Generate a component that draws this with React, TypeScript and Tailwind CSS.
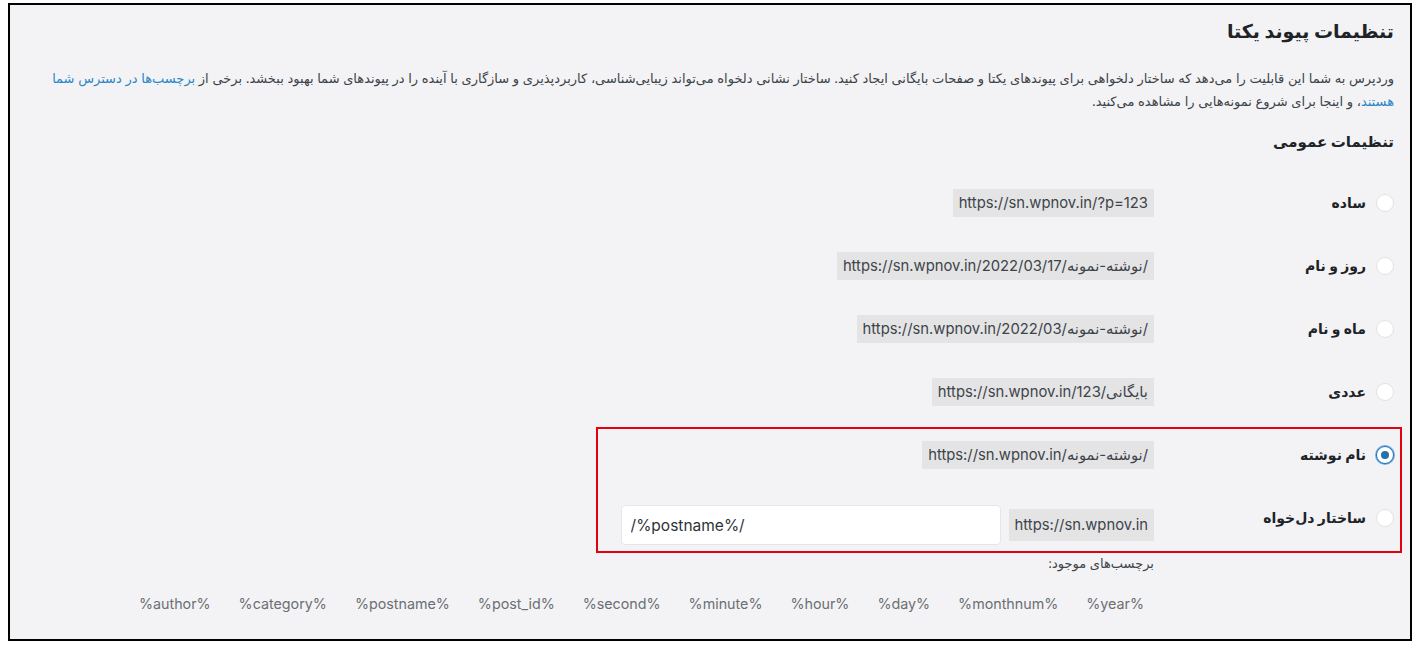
import React from "react";

const rows = [
  { label: "ساده", url: "https://sn.wpnov.in/?p=123" },
  { label: "روز و نام", url: "https://sn.wpnov.in/2022/03/17/نوشته-نمونه/" },
  { label: "ماه و نام", url: "https://sn.wpnov.in/2022/03/نوشته-نمونه/" },
  { label: "عددی", url: "https://sn.wpnov.in/بایگانی/123" },
];

const tags = ["%year%", "%monthnum%", "%day%", "%hour%", "%minute%", "%second%", "%post_id%", "%postname%", "%category%", "%author%"];

function Radio({ checked }: { checked?: boolean }) {
  if (checked)
    return (
      <span className="flex h-[18px] w-[18px] shrink-0 items-center justify-center rounded-full border border-[#2271b1] bg-white shadow-[0_0_0_1px_#72aee6]">
        <span className="h-[8px] w-[8px] rounded-full bg-[#2271b1]" />
      </span>
    );
  return <span className="h-[18px] w-[18px] shrink-0 rounded-full border border-[#e2e2e4] bg-white" />;
}

function Code({ children, tall }: { children: React.ReactNode; tall?: boolean }) {
  return (
    <code dir="ltr" className={`bg-[#e4e4e5] px-[6px] text-[14.8px] text-[#3c434a] ${tall ? "leading-[32px]" : "leading-[28px]"}`} style={{ fontFamily: "Inter, 'DejaVu Sans', sans-serif" }}>
      {children}
    </code>
  );
}

function Row({ label, checked, children }: { label: string; checked?: boolean; children: React.ReactNode }) {
  return (
    <div className="flex h-[63px] items-center">
      <label className="flex w-[240px] shrink-0 items-center gap-[10px]">
        <Radio checked={checked} />
        <span className="text-[14px] font-bold text-[#1d2327]">{label}</span>
      </label>
      <div className="flex items-center">{children}</div>
    </div>
  );
}

export default function App() {
  return (
    <div className="h-[645px] bg-white pl-[8px] pt-[3px]" style={{ fontFamily: "Inter, 'DejaVu Sans', sans-serif" }}>
      <div dir="rtl" className="h-[638px] w-[1404px] overflow-hidden border-2 border-black bg-[#f3f3f5] pl-[26px] pr-[16px] pt-[11px]">
        <h1 className="text-[19px] font-bold leading-[32px] text-[#1d2327]">تنظیمات پیوند یکتا</h1>
        <p className="mt-[19px] text-[13px] leading-[23px] text-[#3c434a]">
          وردپرس به شما این قابلیت را می‌دهد که ساختار دلخواهی برای پیوندهای یکتا و صفحات بایگانی ایجاد کنید. ساختار نشانی دلخواه می‌تواند زیبایی‌شناسی، کاربردپذیری و سازگاری با آینده را در پیوندهای شما بهبود ببخشد. برخی از{" "}
          <a className="text-[#2a86c7]">برچسب‌ها در دسترس شما هستند</a>، و اینجا برای شروع نمونه‌هایی را مشاهده می‌کنید.
        </p>
        <h2 className="mt-[15px] text-[15px] font-bold leading-[28px] text-[#1d2327]">تنظیمات عمومی</h2>
        <div className="mt-[15px]">
          {rows.map((r) => (
            <Row key={r.label} label={r.label}>
              <Code>{r.url}</Code>
            </Row>
          ))}
          <div className="relative">
            <div className="pointer-events-none absolute left-[560px] right-[-8px] top-[4px] bottom-[-4px] border-2 border-[#e3000f]" />
            <Row label="نام نوشته" checked>
              <Code>https://sn.wpnov.in/نوشته-نمونه/</Code>
            </Row>
            <div className="flex items-start">
              <label className="flex h-[63px] w-[240px] shrink-0 items-center gap-[10px]">
                <Radio />
                <span className="text-[14px] font-bold text-[#1d2327]">ساختار دل‌خواه</span>
              </label>
              <div className="flex items-center gap-[8px] pt-[19px]">
                <Code tall>https://sn.wpnov.in</Code>
                <input
                  dir="ltr"
                  readOnly
                  value="/%postname%/"
                  className="h-[40px] w-[380px] rounded-[4px] border border-[#e6e6e8] bg-white px-[9px] text-[15.5px] text-[#2c3338] outline-none"
                />
              </div>
            </div>
          </div>
          <div className="mr-[240px] mt-[4px]">
            <p className="text-[13px] leading-[20px] text-[#3c434a]">برچسب‌های موجود:</p>
            <div className="mt-[21px] flex gap-[8px]">
              {tags.map((t) => (
                <span key={t} dir="ltr" className="px-[10px] text-[14.3px] leading-[20px] text-[#6b6f74]">
                  {t}
                </span>
              ))}
            </div>
          </div>
        </div>
      </div>
    </div>
  );
}
